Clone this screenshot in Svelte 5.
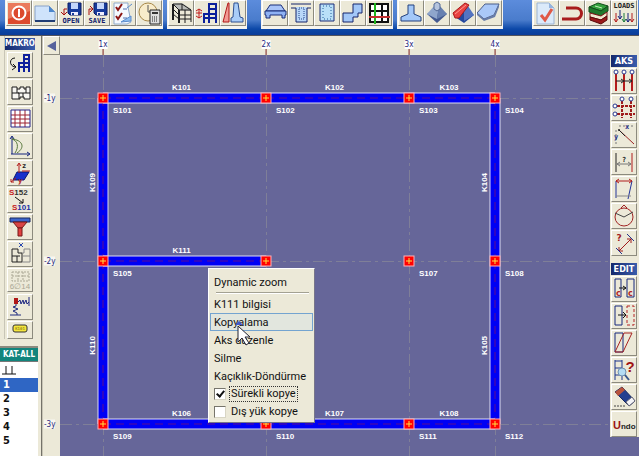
<script lang="ts">
	type Tool = { name: string; icon: string };

	const floppy = `<path d="M9 2h13v12H11l-2-2z" fill="#173b9c" stroke="#0a1d66"/><path d="M12 2h7v6h-7z" fill="#c4d6fa"/><path d="M12 11h7v3h-7z" fill="#eef"/><path d="M13 12h2v2h-2z" fill="#173b9c"/>`;
	const cap = `font-family="DejaVu Sans Mono, monospace" font-weight="700" font-size="7" text-anchor="middle"`;

	const groups: Tool[][] = [
		[
			{ name: 'Exit', icon: `<path d="M1 2h22v21H1z" fill="#dc4a2e"/><path d="M1 2h22v8L1 18z" fill="#ea7a5c"/><circle cx="12" cy="12" r="6.500" fill="#dc4a2e" stroke="#fff" stroke-width="2"/><path d="M12 8v8" stroke="#fff" stroke-width="2"/>` },
			{ name: 'New', icon: `<path d="M2 5h14l6 6v9H2z" fill="#cfe3fb" stroke="#8aa2c8"/><path d="M16 5v6h6z" fill="#4c86cc"/><path d="M2 20h20" stroke="#223e74" stroke-width="2"/>` },
			{ name: 'Open', icon: `${floppy}<path d="M8 8H5v6M2 11l3 3 3-3" fill="none" stroke="#a80e0e"/><text x="12" y="22" fill="#101c6c" ${cap}>OPEN</text>` },
			{ name: 'Save', icon: `${floppy}<path d="M4 14V8h4M5 5l3 3-3 3" fill="none" stroke="#a80e0e"/><text x="12" y="22" fill="#101c6c" ${cap}>SAVE</text>` },
			{ name: 'Check list', icon: `<path d="M3 2h14v4l3 15-4 2H3z" fill="#f4f9ff" stroke="#8fa9cc"/><path d="M16 7l5-4M10 21l10-6v5z" fill="#8bbdf0" stroke="#5c8ccc"/><path d="M5 6l2 3 4-6M5 15l2 3 4-6" fill="none" stroke="#8c1616" stroke-width="2"/><path d="M12 8h4M12 17h4" stroke="#5070b0"/>` },
			{ name: 'Calculate', icon: `<circle cx="11" cy="11" r="9" fill="#f8eccb" stroke="#a88848"/><path d="M11 4v7h5" fill="none" stroke="#555"/><path d="M13 9h10v14H13z" fill="#ddd" stroke="#222"/><path d="M15 11h6v2h-6z" fill="#333"/><path d="M15 16h6M15 18h6M15 20h6" stroke="#222" stroke-dasharray="1 1"/>` }
		],
		[
			{ name: 'Frame', icon: `<path d="M4 3l9-1 9 6v2l-12-1z" fill="#b9bbb8"/><path d="M4 3v16M10 9v13M16 9v13M22 9v12M4 3h9l9 6H10zM4 8l6 6h12M4 13l6 5h12M13 3v6" fill="none" stroke="#1c1c1c"/><path d="M10 9v13M4 3v16" stroke="#1c1c1c" stroke-width="2"/>` },
			{ name: 'Storey copy', icon: `<path d="M4 8v9M1 10l3-2 3 2M1 15l3 2 3-2M1 12h6" fill="none" stroke="#c01818"/><path d="M9 22v-9h5M14 22V3h7v19M14 8h7M9 17h12M14 13h7" fill="none" stroke="#0b1f9c" stroke-width="2"/>` },
			{ name: 'Wall section', icon: `<path d="M2 21L7 2h1v19z" fill="#f29a94" stroke="#b01818"/><path d="M13 2h4l2 14 3 1v4H10v-4l2-1z" fill="#a9cdf8" stroke="#2c4f90"/>` }
		],
		[
			{ name: 'Beam', icon: `<path d="M3 10l4-6h11l4 6z" fill="#a9c4f8" stroke="#182c78"/><path d="M2 10h21v4h-1v3h-3v-3H7v3H3v-3H2z" fill="#8fb2f4" stroke="#182c78"/>` },
			{ name: 'Beam section', icon: `<path d="M7 6h11v15H7z" fill="#b9d7f8"/><path d="M2 3h20M2 7h5v14h11V7h4" fill="none" stroke="#14246c"/><path d="M10 7h5v11h-5z" fill="none" stroke="#24448c" stroke-dasharray="1 1"/>` },
			{ name: 'Column section', icon: `<path d="M5 3h14v17H5z" fill="#b9e0f8" stroke="#1a2c78"/><path d="M8 5h8v13H8z" fill="none" stroke="#24609c" stroke-dasharray="1 2"/>` },
			{ name: 'Stair', icon: `<path d="M2 12h10V3h9v9h-4v4h-5v5H2z" fill="#a3c8f8" stroke="#14246c"/>` },
			{ name: 'Grid slab', icon: `<path d="M3 3h18v18H3z" fill="#fff" stroke="#111" stroke-width="2"/><path d="M15 3v19M3 10h19" stroke="#111" stroke-width="2"/><path d="M8 2v21" stroke="#1fb81f" stroke-width="2"/><path d="M2 16h21" stroke="#c43030" stroke-width="2"/>` }
		],
		[
			{ name: 'Footing', icon: `<path d="M9 4h6v9l7 3v4H2v-4l7-3z" fill="#a3c8f8" stroke="#23417e"/>` },
			{ name: 'Single footing', icon: `<path d="M2 13l10-7 10 7-10 9z" fill="#435990"/><path d="M2 13l8-9h4l-2 14z" fill="#8fa6cc"/><path d="M12 18l2-14 8 9z" fill="#6780b0"/><path d="M9 3l3-2 3 2v5l-3 2-3-2z" fill="#b5c4de" stroke="#536894"/>` },
			{ name: 'Strip footing', icon: `<path d="M4 16l9-9 10 7-10 8z" fill="#24479c"/><path d="M13 9l2-7 8 12-10 6z" fill="#5474c0"/><path d="M2 12L14 2l4 2L8 17H4z" fill="#e84242" stroke="#a81a1a"/><path d="M4 13L15 4" stroke="#ff9a90"/>` },
			{ name: 'Slab', icon: `<path d="M0 12L8 3h14l-5 11-10 4z" fill="#aac8f8" stroke="#4a5c88"/><path d="M0 12l7 6 10-4 5-11v3l-4 10-11 4-7-6z" fill="#687ca8"/>` }
		],
		[
			{ name: 'Verify', icon: `<path d="M3 2h12l5 5v16H3z" fill="#dbeafa" stroke="#9cb4d4"/><path d="M15 2v5h5z" fill="#94b4e0"/><path d="M7 14l4 5 7-11" fill="none" stroke="#e05a48" stroke-width="3"/>` },
			{ name: 'Hook', icon: `<path d="M6 7h10a5 5 0 0 1 0 11H2" fill="none" stroke="#a81c1c" stroke-width="3"/>` },
			{ name: 'Library', icon: `<path d="M3 6l9-4 10 3-7 5z" fill="#33a03c" stroke="#134e1a"/><path d="M3 6v5l12 4 7-5V5l-7 5z" fill="#1f7a2c" stroke="#134e1a"/><path d="M4 12v4l11 3 6-4v-4l-6 4z" fill="#f2ead0" stroke="#7a1616"/><path d="M4 16v3l11 4 6-4v-4l-6 4z" fill="#9c1c1c" stroke="#5a0c0c"/><path d="M9 5l7 2" stroke="#c4f0b8"/>` },
			{ name: 'Loads', icon: `<text x="12" y="7" fill="#222" ${cap}>LOADS</text><g fill="none"><path d="M4 12v9M2 18l2 3 2-3M20 12v9M18 18l2 3 2-3" stroke="#b41c1c"/><path d="M8 9v9M6 15l2 3 2-3M16 12v9M14 18l2 3 2-3" stroke="#16207c"/><path d="M12 12v9M10 18l2 3 2-3" stroke="#1c7c3c"/></g>` }
		]
	];

	const makro: Tool[] = [
		{ name: 'Rotate frame', icon: `<path d="M7 5c-6 0-6 8 0 9M5 11l3 3-4 3" fill="none" stroke="#111"/><path d="M11 19V10h5M16 19V2h5v17M16 6h5M11 14h10M16 10h5" fill="none" stroke="#0e1f9c" stroke-width="2"/>` },
		{ name: 'Plan', icon: `<path d="M4 7h5v2h3V7h4v2h2V7h4v12h-6v-2h-4v2H4zM4 13h7v6M10 13h12M15 13v4M9 9v4M18 9v4" fill="#f8f7f2" stroke="#1a1a1a"/>` },
		{ name: 'Grid', icon: `<path d="M3 3h19v17H3z" fill="#fff"/><path d="M7 3v17M12 3v17M17 3v17M3 8h19M3 12h19M3 16h19" stroke="#9c2030"/><path d="M3 3h19v17H3z" fill="none" stroke="#26268c"/>` },
		{ name: 'Interaction diagram', icon: `<path d="M4 20V3M2 5l2-3 2 3M3 20h18M19 18l3 2-3 2" fill="none" stroke="#14247c"/><path d="M4 5c10 1 14 8 5 14M4 5c6 2 7 8 3 14" fill="none" stroke="#58783c"/>` },
		{ name: 'Axes', icon: `<path d="M9 11h12l-5 8H5z" fill="#1830cc" stroke="#0a1670"/><path d="M11 12V3M9 5l2-3 2 3M14 10h8M8 17l-5 4M3 18v3h3" fill="none" stroke="#b41c1c"/><text x="16" y="7" fill="#222" ${cap}>z</text><text x="12" y="22" fill="#b41c1c" ${cap}>y</text>` },
		{ name: 'Renumber', icon: `<g font-family="Liberation Sans, sans-serif" font-weight="700" font-size="8"><text x="1" y="7" fill="#333"><tspan fill="#c42020">S</tspan>152</text><text x="4" y="22" fill="#2030a4"><tspan fill="#c42020">S</tspan>101</text></g><path d="M7 9l8 6M15 11v4h-4" fill="none" stroke="#111"/>` },
		{ name: 'Column capital', icon: `<path d="M2 3h20v4H2z" fill="#3c66cc" stroke="#182860"/><path d="M5 7h14l-5 6h-4z" fill="#d84444" stroke="#741818"/><path d="M10 13h4v8h-4z" fill="#e04040" stroke="#741818"/>` },
		{ name: 'Mirror plan', icon: `<path d="M4 7h6v4h4v9H4zM4 14h8M9 14v6" fill="none" stroke="#222"/><path d="M14 11h2V7h6v13h-8M15 14h7" fill="none" stroke="#888"/><path d="M11 1l4 4M15 1l-4 4" stroke="#2848b0"/>` },
		{ name: 'Slab steel', icon: `<path d="M4 3h17v9H4zM10 3v9M15 3v9M4 7h17" fill="none" stroke="#aaa794" stroke-dasharray="2 1"/><text x="12" y="20" fill="#aaa794" font-family="Liberation Sans, sans-serif" font-size="8" text-anchor="middle">6∅14</text>` },
		{ name: 'Springs', icon: `<path d="M6 3h4v6H6z" fill="#b01818"/><path d="M10 7l2-2 1 4 2-4 1 4 2-4 1 4 2-2M21 2v9" fill="none" stroke="#1a2480"/><path d="M8 9v2l-3 1 5 2-5 2 4 2v2M2 20h11" fill="none" stroke="#202c80"/>` },
		{ name: 'Label', icon: `<rect x="5" y="3" width="14" height="7" rx="2" fill="#f5e63c" stroke="#333"/><text x="12" y="8" fill="#6c5c10" font-size="4" font-family="DejaVu Sans Mono, monospace" text-anchor="middle">K101</text>` }
	];

	const aks: Tool[] = [
		{ name: 'Axis offset', icon: `<g fill="none" stroke="#b41c1c" stroke-width="2"><path d="M4 5v17M12 5v17M20 5v17"/></g><path d="M4 12h16M9 10l3 2-3 2M17 10l3 2-3 2" fill="none" stroke="#222"/><g fill="#fff" stroke="#2a3890"><circle cx="4" cy="3" r="2"/><circle cx="12" cy="3" r="2"/><circle cx="20" cy="3" r="2"/></g>` },
		{ name: 'Axis grid', icon: `<path d="M10 5v17M19 5v17M5 10h18M5 18h18" fill="none" stroke="#a01c1c" stroke-width="2" stroke-dasharray="3 1"/><g fill="#fff" stroke="#2a3890"><circle cx="10" cy="3" r="2"/><circle cx="19" cy="3" r="2"/><circle cx="3" cy="10" r="2"/><circle cx="3" cy="18" r="2"/></g>` },
		{ name: 'Axis by point', icon: `<path d="M7 7l15 14" stroke="#9c2424"/><path d="M7 7l6 6" stroke="#222"/><circle cx="7" cy="7" r="1" fill="#222"/><path d="M7 3h15M4 7v14" stroke="#777" stroke-dasharray="2 2"/><text x="15" y="6" fill="#26348c" ${cap}>x</text><text x="4" y="16" fill="#26348c" ${cap}>y</text>` },
		{ name: 'Axis distance', icon: `<path d="M4 3v19" stroke="#222"/><path d="M20 3v19" stroke="#b01c1c"/><path d="M5 14h14M8 12l-3 2 3 2M16 12l3 2-3 2" fill="none" stroke="#777"/><text x="12" y="12" fill="#222" ${cap}>?</text>` },
		{ name: 'Skew axis', icon: `<path d="M4 4v17M20 4l-4 18" stroke="#23349c"/><path d="M4 19h15" stroke="#888"/><path d="M4 4h16M7 2L4 4l3 2M17 2l3 2-3 2" fill="none" stroke="#b01c1c"/>` },
		{ name: 'Circular axis', icon: `<circle cx="12" cy="13" r="9" fill="none" stroke="#a02424"/><path d="M12 13L3 9M12 13l9-5" stroke="#444"/><path d="M9 4l3-3 3 3" fill="none" stroke="#a02424"/>` },
		{ name: 'Measure', icon: `<path d="M7 20L19 8M7 16v4h4M15 8h4v4" fill="none" stroke="#a01c1c"/><path d="M4 17l6 6M15 3l7 7" stroke="#24348c"/><text x="7" y="10" font-size="9" font-weight="700" font-family="DejaVu Sans, sans-serif" text-anchor="middle" fill="#a01c1c">?</text>` }
	];

	const edit: Tool[] = [
		{ name: 'Copy', icon: `<path d="M3 2h6v18H3zM15 2h7v18h-7z" fill="none" stroke="#16287c"/><path d="M7 11h7M11 9l3 2-3 2" fill="none" stroke="#111"/><g font-size="8" font-family="DejaVu Sans, sans-serif" font-weight="700" fill="#b42424"><text x="4" y="19">c</text><text x="16" y="19">c</text></g>` },
		{ name: 'Move', icon: `<path d="M3 2h7v19H3z" fill="none" stroke="#16287c"/><path d="M15 2h7v19h-7z" fill="none" stroke="#b42424" stroke-dasharray="3 2"/><path d="M6 11h8M11 8l3 3-3 3" fill="none" stroke="#111"/>` },
		{ name: 'Shear', icon: `<path d="M3 2h8v19H3z" fill="none" stroke="#16287c"/><path d="M12 2h8l-9 19H3z" fill="none" stroke="#a82424"/>` },
		{ name: 'Query', icon: `<path d="M3 2v20M10 2v20M3 3h7M3 10h7M3 17h7" fill="none" stroke="#1c348c"/><circle cx="10" cy="14" r="4" fill="#b4dcf4" stroke="#7090b0"/><path d="M13 17l4 5" stroke="#38588c" stroke-width="2"/><text x="18" y="14" font-size="15" font-weight="700" font-family="Liberation Sans, sans-serif" text-anchor="middle" fill="#a01414">?</text>` },
		{ name: 'Erase', icon: `<path d="M3 7l7-5 13 14-6 5z" fill="#234090" stroke="#18285c"/><path d="M14 17l6-5 3 4-6 5z" fill="#f4f4f8" stroke="#667"/><path d="M3 7l7-5 3 3-7 6z" fill="#b8543c"/><path d="M2 21h12" stroke="#444" stroke-dasharray="2 1"/>` },
		{ name: 'Undo', icon: `<text x="1" y="17" font-size="8" font-family="Liberation Sans, sans-serif" font-weight="700" fill="#222"><tspan font-size="11" fill="#9c1414">U</tspan>ndo</text>` }
	];

	const floors = ['1', '2', '3', '4', '5'];

	// axis positions on the drawing
	const xs = [43, 206, 349, 435];
	const ys = [43, 206, 369];

	const columns = ys.flatMap((y, r) => xs.map((x, c) => ({ x, y, id: 'S' + (101 + r * 4 + c) })));

	// the menu opens over this one, so its label stays off
	const labelled = (id: string) => id !== 'S106';

	const beams = [
		{ id: 'K109', x1: 43, y1: 43, x2: 43, y2: 206 },
		{ id: 'K110', x1: 43, y1: 206, x2: 43, y2: 369 },
		{ id: 'K104', x1: 435, y1: 43, x2: 435, y2: 206 },
		{ id: 'K105', x1: 435, y1: 206, x2: 435, y2: 369 },
		{ id: 'K101', x1: 43, y1: 43, x2: 206, y2: 43 },
		{ id: 'K102', x1: 206, y1: 43, x2: 349, y2: 43 },
		{ id: 'K103', x1: 349, y1: 43, x2: 435, y2: 43 },
		{ id: 'K111', x1: 43, y1: 206, x2: 206, y2: 206 },
		{ id: 'K106', x1: 43, y1: 369, x2: 206, y2: 369 },
		{ id: 'K107', x1: 206, y1: 369, x2: 349, y2: 369 },
		{ id: 'K108', x1: 349, y1: 369, x2: 435, y2: 369 }
	];

	const actions = ['K111 bilgisi', 'Kopyalama', 'Aks düzenle', 'Silme', 'Kaçıklık-Döndürme'];

	let floor = $state('1');
	let active = $state('Kopyalama');
	let keepCopying = $state(true);
	let copyLoads = $state(false);
</script>

{#snippet tool(t: Tool)}
	<button class="tool" aria-label={t.name}>
		<svg width="24" height="24" viewBox="0 0 24 24">{@html t.icon}</svg>
	</button>
{/snippet}

<div class="app">
	<header>
		{#each groups as group, i}
			<div class="group g{i}">
				{#each group as t}{@render tool(t)}{/each}
			</div>
		{/each}
	</header>

	<main>
		<aside>
			<section class="makro">
				<h2>MAKRO</h2>
				{#each makro as t}{@render tool(t)}{/each}
			</section>
			<section class="floors">
				<h3>KAT-ALL</h3>
				<div class="base">
					<svg width="16" height="9" viewBox="0 0 16 9"><path d="M0 8h14M4 0v8M10 0v8" stroke="#111" /></svg>
				</div>
				{#each floors as f}
					<button class:selected={f === floor} onclick={() => (floor = f)}>{f}</button>
				{/each}
			</section>
		</aside>

		<div class="work">
			<div class="top">
				<button class="back" aria-label="Back">
					<svg width="12" height="14" viewBox="0 0 12 14"><path d="M10 2v10L1 7z" fill="#56629c" /></svg>
				</button>
				<div class="ruler">
					{#each xs as x, i}
						<span class="mark" style="left: {x}px">{i + 1}x</span>
					{/each}
				</div>
			</div>
			<div class="bottom">
				<div class="side">
					{#each ys as y, i}
						<span style="top: {y}px">-{i + 1}y</span>
					{/each}
				</div>
				<div class="canvas">
					<svg class="plan">
						{#each xs as x}<line class="axis" x1={x} x2={x} y1="0" y2="100%" />{/each}
						{#each ys as y}<line class="axis" x1="0" x2="100%" y1={y} y2={y} />{/each}
						{#each beams as b}
							<line class="edge" x1={b.x1} y1={b.y1} x2={b.x2} y2={b.y2} />
							<line class="beam" x1={b.x1} y1={b.y1} x2={b.x2} y2={b.y2} />
							<line class="center" x1={b.x1} y1={b.y1} x2={b.x2} y2={b.y2} />
							{#if b.x1 === b.x2}
								<text text-anchor="middle" transform="translate({b.x1 - 8} {(b.y1 + b.y2) / 2 + 3}) rotate(-90)">{b.id}</text>
							{:else}
								<text text-anchor="middle" x={(b.x1 + b.x2) / 2 - 3} y={b.y1 - 8}>{b.id}</text>
							{/if}
						{/each}
						{#each columns as c}
							<rect x={c.x - 5} y={c.y - 5} width="10" height="10" fill="#f00" stroke="#ffb0b8" />
							<path d="M{c.x - 3} {c.y}h6m-3 -3v6" stroke="#ffe040" />
							{#if labelled(c.id)}<text x={c.x + 10} y={c.y + 15}>{c.id}</text>{/if}
						{/each}
					</svg>

					<div class="menu">
						<button class="item">Dynamic zoom</button>
						<hr />
						{#each actions as a}
							<button class="item" class:active={a === active} onmouseenter={() => (active = a)}>{a}</button>
						{/each}
						<label class="item focus"><input type="checkbox" bind:checked={keepCopying} /><span>Sürekli kopye</span></label>
						<label class="item"><input type="checkbox" bind:checked={copyLoads} /><span>Dış yük kopye</span></label>
						<svg class="pointer" width="16" height="28" viewBox="0 0 16 28">
							<path d="M0 4h8L4 0z" fill="#4058cc" />
							<path d="M3 5v16l4-4 4 7 3-2-4-6h5z" fill="#fff" stroke="#223" />
						</svg>
					</div>

					<div class="palette">
						<h2>AKS</h2>
						{#each aks as t}{@render tool(t)}{/each}
						<h2 class="second">EDIT</h2>
						{#each edit as t}{@render tool(t)}{/each}
					</div>
				</div>
			</div>
		</div>
	</main>
</div>

<style>
	:global(body) {
		margin: 0;
	}

	.app {
		display: flex;
		flex-direction: column;
		height: 100vh;
		overflow: hidden;
		background: #ece9d8;
		font-family: Tahoma, 'DejaVu Sans Condensed', 'DejaVu Sans', sans-serif;
		font-size: 11px;
		color: #111;
	}

	button {
		font: inherit;
		color: inherit;
		padding: 0;
		border: 0;
		background: none;
	}

	svg {
		display: block;
	}

	header {
		display: flex;
		align-items: flex-start;
		box-sizing: border-box;
		height: 36px;
		flex: none;
		background: linear-gradient(#5c8cdc, #4a7ccc 20px, #0c48a8 29px, #0a3c98);
		border-bottom: 1px solid #55555c;
	}

	.group {
		display: flex;
		padding: 0 1px 3px;
		background: #f7f5ee;
	}

	.g0 {
		margin-left: 5px;
	}

	.g1,
	.g3 {
		margin-left: 4px;
	}

	.g2 {
		margin-left: 14px;
	}

	.g4 {
		margin-left: 29px;
	}

	.tool {
		flex: none;
		box-sizing: border-box;
		width: 26px;
		height: 26px;
		overflow: hidden;
		border: 1px solid;
		border-color: #fff #8c8a7e #8c8a7e #fff;
		background: #ece9d8;
	}

	main {
		display: flex;
		flex: 1;
		min-height: 0;
	}

	aside {
		box-sizing: border-box;
		width: 43px;
		display: flex;
		flex-direction: column;
		justify-content: space-between;
		border-right: 2px groove #c8c5b6;
	}

	h2,
	h3 {
		margin: 0;
		font-size: 9px;
		line-height: 12px;
		color: #fff;
		text-align: center;
	}

	h2 {
		background: linear-gradient(90deg, #14286c, #3a5cac);
	}

	.makro {
		display: flex;
		flex-direction: column;
		align-items: center;
		gap: 1px;
		margin: 0 6px 0 4px;
		padding-top: 2px;
		border-left: 1px solid #c8c5b6;
	}

	.makro h2 {
		width: 100%;
		margin-bottom: 1px;
		font-size: 8px;
	}

	.makro .tool:nth-of-type(9) {
		height: 24px;
		margin-bottom: 1px;
	}

	.makro .tool:last-child {
		height: 18px;
	}

	.makro .tool {
		display: flex;
		align-items: flex-start;
	}

	.floors {
		display: flex;
		flex-direction: column;
		height: 108px;
		margin-right: 3px;
		background: #fff;
		border-top: 2px solid #8c8a7e;
	}

	h3 {
		line-height: 13px;
		background: #12857c;
		border-bottom: 1px solid #777;
		font-size: 8px;
	}

	.base {
		padding: 4px 2px 3px;
	}

	.floors button {
		flex: none;
		padding-left: 3px;
		text-align: left;
		font-size: 11px;
		font-weight: bold;
		line-height: 14px;
	}

	.floors .selected {
		background: #2f66c4;
		color: #fff;
	}

	.work {
		flex: 1;
		display: flex;
		flex-direction: column;
		min-width: 0;
	}

	.top {
		display: flex;
		height: 19px;
	}

	.back {
		width: 17px;
		display: flex;
		align-items: center;
		justify-content: center;
		border: 1px solid;
		border-color: #fff #8c8a7e #8c8a7e #fff;
		box-sizing: border-box;
	}

	.ruler,
	.side {
		position: relative;
		font-size: 8px;
		line-height: 9px;
		color: #26267c;
	}

	.ruler {
		flex: 1;
	}

	.mark {
		position: absolute;
		top: 4px;
		transform: translateX(-50%);
		background: #fff;
	}

	.mark::after {
		content: '';
		position: absolute;
		left: 50%;
		top: 9px;
		height: 6px;
		border-left: 1px solid #7c2020;
	}

	.bottom {
		flex: 1;
		display: flex;
		min-height: 0;
	}

	.side {
		width: 17px;
	}

	.side span {
		position: absolute;
		left: 1px;
		transform: translateY(-50%);
		background: #f8f7f2;
	}

	.canvas {
		position: relative;
		flex: 1;
		overflow: hidden;
		background: #666699;
	}

	.plan {
		width: 100%;
		height: 100%;
	}

	.plan text {
		fill: #fff;
		font-family: 'Liberation Sans', Arial, sans-serif;
		font-size: 8px;
		font-weight: bold;
	}

	.axis {
		stroke: #7f7f98;
		stroke-dasharray: 12 4 3 4;
		shape-rendering: crispEdges;
	}

	.edge {
		stroke: #dcdcf4;
		stroke-width: 11px;
	}

	.beam {
		stroke: #0000f4;
		stroke-width: 9px;
	}

	.center {
		stroke: #5c0c90;
		stroke-dasharray: 8 5;
	}

	.menu {
		position: absolute;
		left: 148px;
		top: 213px;
		box-sizing: border-box;
		padding: 4px 1px 1px 1px;
		width: 107px;
		background: #ece9d8;
		border: 1px solid;
		border-color: #fff #77758a #77758a #fff;
		font-family: Roboto, 'Liberation Sans', sans-serif;
	}

	.item {
		display: flex;
		align-items: center;
		box-sizing: border-box;
		width: 100%;
		height: 18px;
		padding-left: 3px;
		border: 1px solid transparent;
		white-space: nowrap;
	}

	.item.active {
		border-color: #74a4d0;
		background: #e2e6de;
	}

	.item span {
		margin-left: 3px;
		padding: 0 1px;
		border: 1px solid transparent;
		line-height: 14px;
	}

	.item.focus span {
		border: 1px dotted #333;
	}

	.menu hr {
		margin: 1px 4px 1px 6px;
		border: 0;
		border-top: 1px solid #a3a192;
		border-bottom: 1px solid #fff;
	}

	.menu input {
		appearance: none;
		flex: none;
		box-sizing: border-box;
		width: 12px;
		height: 12px;
		margin: 0;
		border: 1px solid;
		border-color: #77756c #d8d5c4 #d8d5c4 #77756c;
		background: #fff;
	}

	.menu input:checked::after {
		content: '';
		display: block;
		width: 3px;
		height: 6px;
		margin-left: 3px;
		border: solid #111;
		border-width: 0 2px 2px 0;
		transform: rotate(40deg);
	}

	.pointer {
		position: absolute;
		left: 26px;
		top: 52px;
		pointer-events: none;
	}

	.palette {
		position: absolute;
		right: 0;
		top: 0;
		display: flex;
		flex-direction: column;
		gap: 1px;
		padding-right: 2px;
		padding-left: 1px;
		background: #ece9d8;
	}

	.palette .second {
		margin-top: 6px;
	}
</style>
